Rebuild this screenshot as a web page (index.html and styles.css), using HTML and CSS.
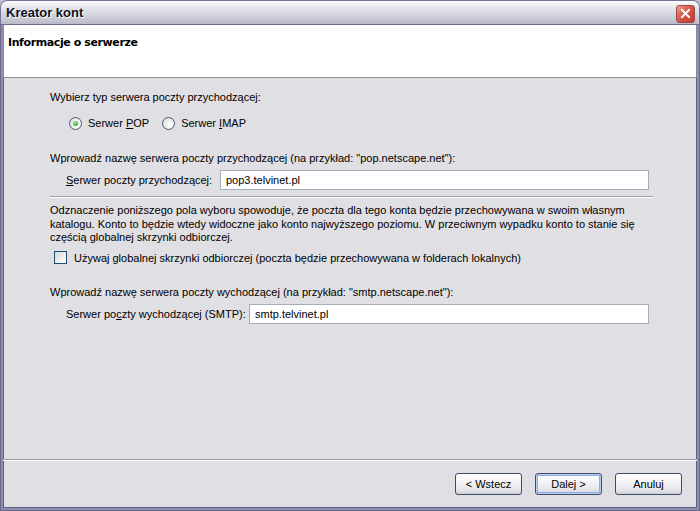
FILE: index.html
```html
<!DOCTYPE html>
<html lang="pl">

<head>
    <meta charset="UTF-8">
    <title>Kreator kont</title>
    <link rel="stylesheet" href="styles.css">
</head>

<body>
    <div class="window">
        <div class="titlebar">
            <span class="title">Kreator kont</span>
            <span class="close">
                <svg width="11" height="11" viewBox="0 0 11 11">
                    <path d="M2 2 L9 9 M9 2 L2 9" stroke="#ffffff" stroke-width="2" stroke-linecap="square" />
                </svg>
            </span>
        </div>

        <div class="frame">
            <div class="header">
                <h2>Informacje o serwerze</h2>
            </div>

            <div class="content">
                <p class="label first">Wybierz typ serwera poczty przychodzącej:</p>
                <div class="radios">
                    <label class="choice"><span class="radio checked"></span><span>Serwer <u>P</u>OP</span></label>
                    <label class="choice"><span class="radio"></span><span>Serwer <u>I</u>MAP</span></label>
                </div>

                <p class="label gap">Wprowadź nazwę serwera poczty przychodzącej (na przykład: "pop.netscape.net"):</p>
                <div class="field">
                    <span class="field-label"><u>S</u>erwer poczty przychodzącej:</span>
                    <span class="input">pop3.telvinet.pl</span>
                </div>

                <div class="separator"></div>

                <p class="note">Odznaczenie poniższego pola wyboru spowoduje, że poczta dla tego konta będzie przechowywana w swoim własnym
                    katalogu. Konto to będzie wtedy widoczne jako konto najwyższego poziomu. W przeciwnym wypadku konto to stanie się
                    częścią globalnej skrzynki odbiorczej.</p>

                <label class="check-row"><span class="checkbox"></span><span>Używaj globalnej skrzynki odbiorczej (poczta będzie przechowywana w folderach lokalnych)</span></label>

                <p class="label gap2">Wprowadź nazwę serwera poczty wychodzącej (na przykład: "smtp.netscape.net"):</p>
                <div class="field">
                    <span class="field-label">Serwer po<u>c</u>zty wychodzącej (SMTP):</span>
                    <span class="input">smtp.telvinet.pl</span>
                </div>
            </div>

            <div class="footer">
                <button class="btn">&lt; Wstecz</button>
                <button class="btn default">Dalej &gt;</button>
                <button class="btn last">Anuluj</button>
            </div>
        </div>
    </div>
</body>

</html>
```

FILE: styles.css
```css
body {
    margin: 0;
    font-family: "Liberation Sans", Arial, sans-serif;
    font-size: 11px;
    color: #000;
    background-color: #e0dfe3;
}

.window {
    width: 700px;
    height: 511px;
    display: flex;
    flex-direction: column;
    box-sizing: border-box;
    background-color: #c4c4d4;
}

.titlebar {
    height: 24px;
    flex: none;
    display: flex;
    align-items: center;
    justify-content: space-between;
    padding: 0 4px 0 5px;
    border-radius: 7px 7px 0 0;
    border: 1px solid #74749a;
    border-bottom: none;
    box-sizing: border-box;
    background: linear-gradient(#fafafd, #e8e8ef 25%, #d6d6e0 55%, #c4c4d2 85%, #b8b8c9);
}

.title {
    font-family: "Liberation Sans", Arial, sans-serif;
    font-weight: bold;
    font-size: 13px;
    color: #101020;
    text-shadow: 1px 1px 0 #ffffff;
}

.close {
    width: 19px;
    height: 18px;
    box-sizing: border-box;
    border: 1px solid #9a4a4a;
    border-radius: 3px;
    background: linear-gradient(135deg, #f0a090, #d8574a 45%, #c0392e);
    display: flex;
    align-items: center;
    justify-content: center;
    margin-top: 2px;
}

.frame {
    flex: 1;
    display: flex;
    flex-direction: column;
    border: 3px solid #8e8eae;
    border-top: none;
    box-shadow: inset 1px 0 0 #5f5f80, inset -1px 0 0 #5f5f80, inset 0 -1px 0 #5f5f80;
    outline: 1px solid #6a6a8a;
    outline-offset: -1px;
    background-color: #e0dfe3;
    min-height: 0;
}

.header {
    height: 53px;
    flex: none;
    background-color: #ffffff;
    border-left: 1px solid #8a8aa8;
    border-right: 1px solid #8a8aa8;
    border-bottom: 1px solid #8d8d94;
    padding: 0 0 0 4px;
}

.header h2 {
    margin: 12px 0 0;
    font-size: 11px;
    font-weight: bold;
    letter-spacing: -0.4px;
    font-family: "DejaVu Sans", "Liberation Sans", sans-serif;
}

.content {
    flex: 1;
    padding: 0 44px 0 47px;
    border-bottom: 1px solid #a0a0a8;
    box-shadow: 0 1px 0 #ffffff;
}

.label {
    margin: 0;
    line-height: 14px;
}

.label.first {
    margin-top: 12px;
}

.label.gap {
    margin-top: 21px;
}

.label.gap2 {
    margin-top: 20px;
}

.radios {
    display: flex;
    gap: 13px;
    margin-top: 12px;
    padding-left: 19px;
    line-height: 14px;
}

.choice {
    display: flex;
    align-items: center;
    gap: 6px;
}

.radio {
    width: 13px;
    height: 13px;
    box-sizing: border-box;
    border-radius: 50%;
    border: 1px solid #4a5a78;
    background: radial-gradient(circle at 65% 65%, #ffffff, #f0f0f0 40%, #d6d6de);
    display: flex;
    align-items: center;
    justify-content: center;
}

.radio.checked::after {
    content: "";
    width: 5px;
    height: 5px;
    border-radius: 50%;
    background: radial-gradient(circle at 40% 35%, #a6eea0, #31b02a 70%);
}

.field {
    display: flex;
    align-items: center;
    margin-top: 5px;
    padding-left: 16px;
}

.field-label {
    flex: none;
    width: 154px;
}

.field:last-child .field-label {
    width: 183px;
}

.input {
    flex: 1;
    height: 20px;
    line-height: 18px;
    box-sizing: border-box;
    border: 1px solid #a5acb5;
    background-color: #ffffff;
    padding: 0 5px;
    margin-right: 4px;
}

.separator {
    height: 1px;
    margin-top: 6px;
    background-color: #a0a0a8;
    box-shadow: 0 1px 0 #ffffff;
}

.note {
    margin: 7px 0 0;
    line-height: 13.5px;
}

.check-row {
    display: flex;
    align-items: center;
    gap: 7px;
    margin-top: 6px;
    padding-left: 4px;
    line-height: 14px;
}

.checkbox {
    width: 13px;
    height: 13px;
    box-sizing: border-box;
    border: 1px solid #1c4c74;
    background: linear-gradient(135deg, #d8d8d2, #f4f4f0 70%, #ffffff);
}

.footer {
    height: 48px;
    flex: none;
    display: flex;
    align-items: flex-start;
    justify-content: flex-end;
    padding: 13px 15px 0 0;
    box-sizing: border-box;
}

.btn {
    width: 67px;
    height: 22px;
    margin-left: 13px;
    font-family: "Liberation Sans", Arial, sans-serif;
    font-size: 11px;
    color: #000;
    border: 1px solid #3d4a68;
    border-radius: 3px;
    background: linear-gradient(#ffffff, #f4f4f6 40%, #e4e4ea 80%, #cfcfd8);
    padding: 0;
}

.btn.default {
    box-shadow: inset 0 0 0 1px #bcd0ee, inset 0 0 0 2px #8aaee2;
}
```
